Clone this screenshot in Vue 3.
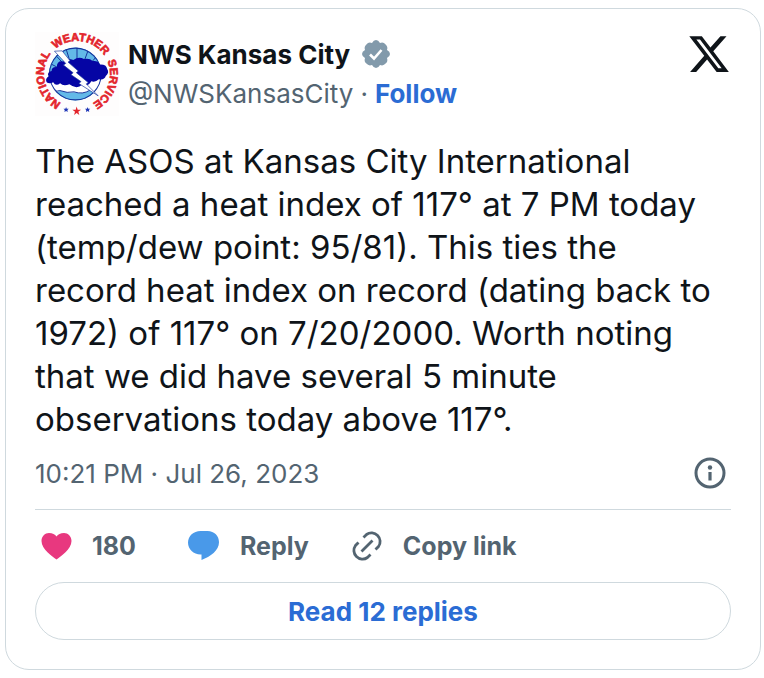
<script setup>
import { ref } from 'vue'

const post = {
  name: 'NWS Kansas City',
  handle: '@NWSKansasCity',
  lines: [
    'The ASOS at Kansas City International',
    'reached a heat index of 117° at 7 PM today',
    '(temp/dew point: 95/81). This ties the',
    'record heat index on record (dating back to',
    '1972) of 117° on 7/20/2000. Worth noting',
    'that we did have several 5 minute',
    'observations today above 117°.',
  ],
  time: '10:21 PM · Jul 26, 2023',
  replies: 12,
}
const likes = ref(180)
</script>

<template>
  <article class="card">
    <header class="head">
      <a class="avatar" href="#" aria-label="National Weather Service">
        <svg viewBox="108 94 254 254">
          <defs>
            <path id="ring" d="M235 321A100 100 0 1 1 235.1 321" />
            <clipPath id="disc"><circle cx="230" cy="221" r="80" /></clipPath>
          </defs>
          <rect x="108" y="94" width="254" height="254" fill="#fefdfd" />
          <g clip-path="url(#disc)">
            <rect x="140" y="135" width="180" height="170" fill="#fff" />
            <path d="M145 215V135H315V215Z" fill="#63b9e8" />
            <path d="M150 274Q167 283 184 272Q206 280 226 276Q252 284 275 271L310 278V310H150Z" fill="#63b9e8" />
            <g stroke="#15349c" stroke-width="3" fill="none">
              <path d="M235 138V190M202 145L214 184M270 146L256 184M174 168L194 190M294 168L275 190M159 192L180 203" />
              <path d="M152 260Q166 278 183 271Q206 280 226 275Q252 284 274 270" />
            </g>
            <circle cx="230" cy="221" r="79" fill="none" stroke="#15349c" stroke-width="5" />
          </g>
          <path d="M144 247Q137 237 149 228Q143 216 158 212Q158 199 174 200Q174 180 193 183Q205 171 224 179Q240 167 256 176Q273 172 282 182Q298 179 304 192Q324 191 326 205Q334 217 322 227Q318 240 301 237Q291 247 278 243Q270 260 251 253Q234 269 212 252Q194 260 184 249Q171 260 163 246Q152 252 144 247Z" fill="#0505a4" />
          <path d="M167 152L190 151L214 181L208 185L239 212L233 217L269 247L263 251L299 287L241 250L247 244L217 223L223 217L194 194L201 189Z" fill="#fff" stroke="#15349c" stroke-width="2" />
          <g class="ring-text">
            <text><textPath href="#ring" startOffset="21.7%">NATIONAL</textPath></text>
            <text><textPath href="#ring" startOffset="52%">WEATHER</textPath></text>
            <text><textPath href="#ring" startOffset="80.3%">SERVICE</textPath></text>
          </g>
          <path d="M234 319L237 329H247L239 335L242 345L234 339L226 345L229 335L221 329H231Z" fill="#e3252c" />
          <path d="M202 321L204 326H210L206 330L207 336L202 333L197 336L198 330L194 326H200ZM267 321L269 326H275L271 330L272 336L267 333L262 336L263 330L259 326H265Z" fill="#2038b8" />
        </svg>
      </a>
      <div class="who">
        <div class="name-row">
          <a class="name" href="#">{{ post.name }}</a>
          <svg class="badge" viewBox="0 0 28 28" role="img" aria-label="Verified account">
            <path d="M14 0Q16.400 0 18 3Q21.500 1.800 23.600 4.400Q26.200 6.500 25 10Q28 11.600 28 14Q28 16.400 25 18Q26.200 21.500 23.600 23.600Q21.500 26.200 18 25Q16.400 28 14 28Q11.600 28 10 25Q6.500 26.200 4.400 23.600Q1.800 21.500 3 18Q0 16.400 0 14Q0 11.600 3 10Q1.800 6.500 4.400 4.400Q6.500 1.800 10 3Q11.600 0 14 0Z" fill="#829aab" />
            <path d="M8 14.500L12 18.500L19.500 10" fill="none" stroke="#fff" stroke-width="2.600" />
          </svg>
        </div>
        <div class="handle-row">
          <a class="handle" href="#">{{ post.handle }}</a>
          <span>·</span>
          <a class="follow" href="#">Follow</a>
        </div>
      </div>
      <a class="x-logo" href="#" aria-label="View on X">
        <svg viewBox="0 0 24 24">
          <path d="M18.244 2.250h3.308l-7.227 8.260 8.502 11.240H16.170l-5.214-6.817L4.990 21.750H1.680l7.730-8.835L1.254 2.250H8.080l4.713 6.231zm-1.161 17.520h1.833L7.084 4.126H5.117z" fill="#0f1419" />
        </svg>
      </a>
    </header>

    <p class="body">
      <span v-for="line in post.lines" :key="line" class="line">{{ line }} </span>
    </p>

    <div class="meta">
      <a class="time" href="#">{{ post.time }}</a>
      <a class="info" href="#" aria-label="Ads info and privacy">
        <svg viewBox="0 0 32 32" fill="none">
          <circle cx="16" cy="16" r="14" stroke="#536471" stroke-width="3" />
          <circle cx="16" cy="10.500" r="2.200" fill="#536471" />
          <path d="M16 15V23.500" stroke="#536471" stroke-width="3.200" />
        </svg>
      </a>
    </div>

    <div class="actions">
      <button type="button" class="action" aria-label="Like" @click="likes++">
        <svg viewBox="0 0 32 32">
          <path d="M16.500 29.500C12.500 26.500 1.500 19.500 1.500 11C1.500 6.500 5 3 9 3C12.500 3 15 4.500 16.500 6.500C18 4.500 20.500 3 24 3C28 3 31.500 6.500 31.500 11C31.500 19.500 20.500 26.500 16.500 29.500Z" fill="#e8387f" />
        </svg>
        <span class="count">{{ likes }}</span>
      </button>
      <button type="button" class="action">
        <svg viewBox="0 0 32 32">
          <path d="M12.500 1H19.500C26.500 1 31 6 31 12.200C31 20.500 22.500 26.500 13.500 30V24.400H12.500C5.500 24.400 0 19.300 0 12.500C0 6 5.500 1 12.500 1Z" fill="#4999e9" />
        </svg>
        <span>Reply</span>
      </button>
      <button type="button" class="action">
        <svg viewBox="0 0 32 32" fill="none" stroke="#536471" stroke-width="2.800">
          <path d="M12.500 7.500L15.500 4.500A8.600 8.600 0 0 1 27.500 16.500L24.500 19.500M19.500 24.500L16.500 27.500A8.600 8.600 0 0 1 4.500 15.500L7.500 12.500M10.500 21.500L21.500 10.500" />
        </svg>
        <span>Copy link</span>
      </button>
    </div>

    <a class="replies" href="#">Read {{ post.replies }} replies</a>
  </article>
</template>

<style>
body {
  margin: 0;
  background: #fff;
}
</style>

<style scoped>
.card {
  box-sizing: border-box;
  margin: 8px 3px 8px 5px;
  padding: 23px 29px 29px;
  border: 1px solid #cfd9de;
  border-radius: 24px;
  font-family: Inter, "Liberation Sans", sans-serif;
  font-size: 26px;
  color: #0f1419;
  background: #fff;
}
a {
  color: inherit;
  text-decoration: none;
}
svg {
  display: block;
  width: 100%;
  height: 100%;
}
.head {
  display: flex;
  align-items: flex-start;
}
.avatar {
  width: 84px;
  height: 84px;
  margin-right: 9px;
}
.ring-text {
  font-family: "Liberation Sans", sans-serif;
  font-size: 34px;
  font-weight: 700;
  fill: #e3252c;
  stroke: #e3252c;
  stroke-width: 2;
  text-anchor: middle;
}
.who {
  flex: 1;
  padding-top: 2px;
}
.name-row {
  display: flex;
  align-items: center;
  gap: 12px;
  height: 40px;
}
.name {
  font-weight: 700;
}
.badge {
  width: 28px;
  height: 28px;
}
.handle-row {
  display: flex;
  align-items: center;
  gap: 7px;
  height: 38px;
  color: #536471;
}
.follow {
  font-weight: 700;
  color: #2b6cd4;
}
.x-logo {
  width: 44px;
  height: 44px;
}
.body {
  margin: 24px 0 0;
  font-size: 33px;
  line-height: 43px;
}
.line {
  display: block;
}
.meta {
  display: flex;
  align-items: center;
  justify-content: space-between;
  height: 64px;
  padding: 0 5px 4px 0;
  border-bottom: 1px solid #cfd9de;
  color: #536471;
}
.info {
  width: 32px;
  height: 32px;
}
.actions {
  display: flex;
  align-items: center;
  gap: 42px;
  height: 72px;
  padding-left: 5px;
}
.action {
  display: flex;
  align-items: center;
  gap: 20px;
  padding: 0;
  border: 0;
  background: none;
  font: inherit;
  font-size: 25px;
  font-weight: 700;
  color: #536471;
}
.action svg {
  width: 32px;
  height: 32px;
}
.count {
  min-width: 54px;
  text-align: left;
}
.replies {
  display: flex;
  align-items: center;
  justify-content: center;
  height: 56px;
  border: 1px solid #cfd9de;
  border-radius: 29px;
  font-weight: 700;
  color: #2b6cd4;
}
</style>
